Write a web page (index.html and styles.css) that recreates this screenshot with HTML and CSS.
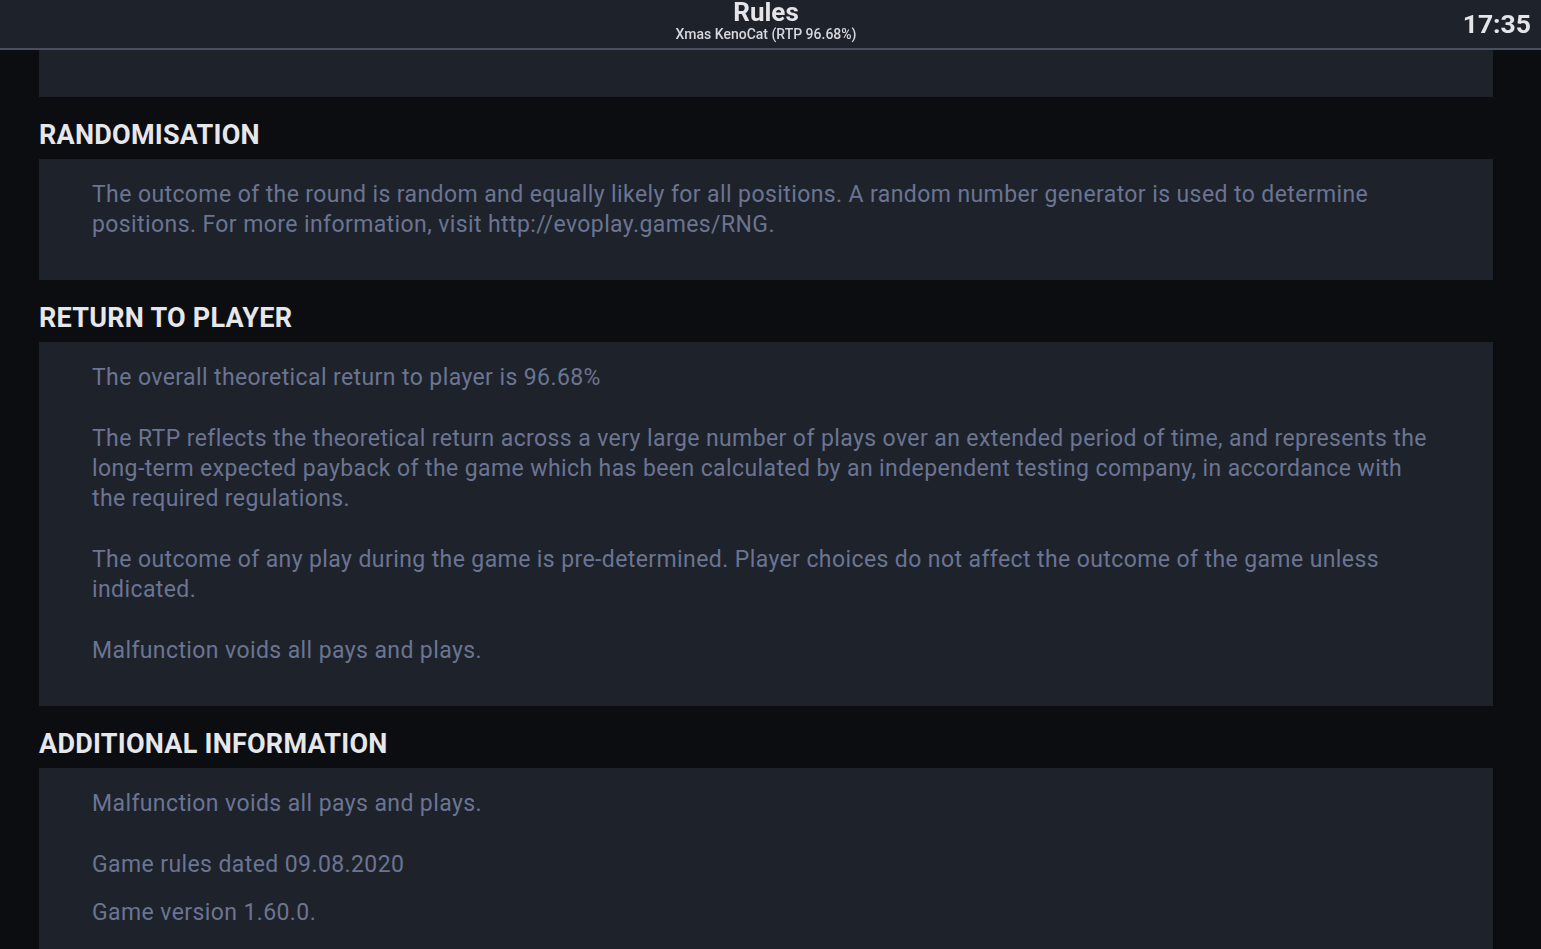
FILE: index.html
```
<!DOCTYPE html>
<html lang="en">
<head>
    <meta charset="UTF-8">
    <meta name="viewport" content="width=device-width, initial-scale=1.0">
    <title>Rules</title>
    <link rel="stylesheet" href="styles.css">
</head>
<body>
    <header class="topbar">
        <div class="title">
            <h1>Rules</h1>
            <p>Xmas KenoCat (RTP 96.68%)</p>
        </div>
        <div class="clock">17:35</div>
    </header>

    <main class="rules">
        <!-- previous section, scrolled under the header -->
        <div class="panel panel-cut"></div>

        <h2>RANDOMISATION</h2>
        <div class="panel">
            <p>The outcome of the round is random and equally likely for all positions. A random number generator is used to determine positions. For more information, visit http://evoplay.games/RNG.</p>
        </div>

        <h2>RETURN TO PLAYER</h2>
        <div class="panel">
            <p>The overall theoretical return to player is 96.68%</p>
            <p>The RTP reflects the theoretical return across a very large number of plays over an extended period of time, and represents the long-term expected payback of the game which has been calculated by an independent testing company, in accordance with the required regulations.</p>
            <p>The outcome of any play during the game is pre-determined. Player choices do not affect the outcome of the game unless indicated.</p>
            <p>Malfunction voids all pays and plays.</p>
        </div>

        <h2>ADDITIONAL INFORMATION</h2>
        <div class="panel">
            <p>Malfunction voids all pays and plays.</p>
            <p>Game rules dated 09.08.2020</p>
            <p class="tight">Game version 1.60.0.</p>
        </div>
    </main>
</body>
</html>
```

FILE: styles.css
```
* {margin: 0; padding: 0; box-sizing: border-box;}
html, body {background: #0b0d11;}
body {font-family: Roboto, "Liberation Sans", sans-serif; color: #6b7592;}

.topbar {position: fixed; top: 0; left: 0; right: 0; height: 50px; padding-right: 9px;
    background: #1e222b; border-bottom: 2px solid #4a4f60;
    display: flex; justify-content: center; z-index: 2;}
.title {text-align: center;}
.title h1 {font-size: 26px; font-weight: 700; color: #e4e5e8; line-height: 24px;}
.title p {font-size: 14px; font-weight: 500; color: #d6d8dd; line-height: 20px;}
.clock {position: absolute; right: 10px; top: 8px;
    font-size: 26.5px; font-weight: 700; color: #e4e5e8;}

.rules {padding: 0 48px 80px 39px;}
.rules h2 {font-size: 27px; font-weight: 700; color: #e6e7ea; letter-spacing: 0.25px;
    line-height: 32px; margin: 22px 0 8px;}
.panel {background: #1e222b; padding: 21px 53px 40px;}
.panel-cut {height: 97px;}
.panel p {font-size: 23px; line-height: 30px; letter-spacing: 0.4px;}
.panel p + p {margin-top: 31px;}
.panel p.tight {margin-top: 18px;}
```
